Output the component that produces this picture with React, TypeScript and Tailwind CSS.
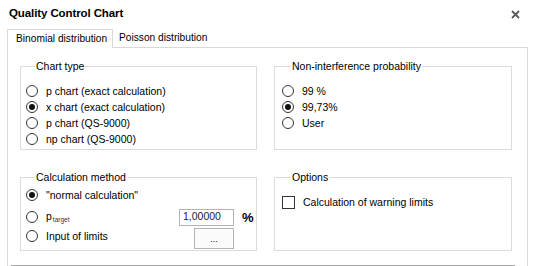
import type { ReactNode } from 'react';

function Radio({ checked = false }: { checked?: boolean }) {
  return (
    <span className="flex h-[12px] w-[12px] shrink-0 items-center justify-center rounded-full border border-[#333333] bg-white">
      {checked && <span className="h-[6px] w-[6px] rounded-full bg-[#111111]" />}
    </span>
  );
}

function Option({ checked, children }: { checked?: boolean; children: ReactNode }) {
  return (
    <div className="flex h-[16px] items-center gap-[8px]">
      <Radio checked={checked} />
      <span className="leading-none">{children}</span>
    </div>
  );
}

function Group({ title, className, children }: { title: string; className: string; children: ReactNode }) {
  return (
    <fieldset className={`border border-[#dcdcdc] ${className}`}>
      <legend className="ml-[9px] px-[1px] text-[10.5px] leading-[12px]">{title}</legend>
      {children}
    </fieldset>
  );
}

export default function App() {
  return (
    <div className="h-[266px] w-[535px] overflow-hidden bg-white font-['Liberation_Sans',Arial,sans-serif] text-[10.5px] text-black">
      {/* title bar */}
      <div className="flex h-[28px] items-center justify-between pl-[9px] pr-[15px]">
        <span className="text-[11.5px] font-bold tracking-[-0.1px]">Quality Control Chart</span>
        <svg width="9" height="9" viewBox="0 0 9 9" className="mt-[1px]">
          <path d="M1 1L8 8M8 1L1 8" stroke="#5a5a5a" strokeWidth="1.8" />
        </svg>
      </div>

      {/* tabs */}
      <div className="flex h-[19px] items-end pl-[7px]">
        <div className="relative z-10 -mb-px flex h-[19px] w-[106px] items-center border border-b-0 border-[#d9d9d9] bg-white pl-[8px] text-[10.2px]">
          Binomial distribution
        </div>
        <div className="flex h-[18px] items-center pl-[6px] text-[10.2px]">Poisson distribution</div>
      </div>

      {/* tab page */}
      <div className="ml-[7px] flex h-[260px] w-[521px] flex-col border border-[#d9d9d9]">
        <div className="ml-[12px] mt-[12px] grid grid-cols-[237px_238px] gap-x-[17px] gap-y-[21px]">
          <Group title="Chart type" className="h-[90px] pl-[5px] pt-[11px]">
            <Option>p chart (exact calculation)</Option>
            <Option checked>x chart (exact calculation)</Option>
            <Option>p chart (QS-9000)</Option>
            <Option>np chart (QS-9000)</Option>
          </Group>

          <Group title="Non-interference probability" className="h-[90px] pl-[7px] pt-[11px]">
            <Option>99 %</Option>
            <Option checked>99,73%</Option>
            <Option>User</Option>
          </Group>

          <Group title="Calculation method" className="h-[80px] pl-[5px] pt-[4px]">
            <Option checked>&quot;normal calculation&quot;</Option>
            <div className="mt-[6px] flex h-[16px] items-center">
              <div className="flex w-[153px] items-center gap-[8px]">
                <Radio />
                <span className="leading-none">
                  p<span className="ml-[1px] align-[-2px] text-[6.5px] text-[#333333]">target</span>
                </span>
              </div>
              <div className="flex h-[17px] w-[55px] items-center border border-[#b4b4b4] pl-[3px] text-[#1a1a40]">
                1,00000
              </div>
              <span className="ml-[8px] text-[13px] font-bold leading-none">%</span>
            </div>
            <div className="mt-[3px] flex items-start">
              <div className="w-[168px]">
                <Option>Input of limits</Option>
              </div>
              <div className="flex h-[21px] w-[40px] items-end justify-center border border-[#b4b4b4] bg-[#fbfbfb] pb-[4px] text-[9px] leading-none">
                ...
              </div>
            </div>
          </Group>

          <Group title="Options" className="h-[80px] pl-[7px] pt-[11px]">
            <div className="flex h-[16px] items-center gap-[8px]">
              <span className="h-[13px] w-[13px] shrink-0 border border-[#333333] bg-white" />
              <span className="leading-none">Calculation of warning limits</span>
            </div>
          </Group>
        </div>

        <div className="ml-[3px] mt-[14px] h-px w-[504px] bg-[#a8a8a8]" />
      </div>
    </div>
  );
}
